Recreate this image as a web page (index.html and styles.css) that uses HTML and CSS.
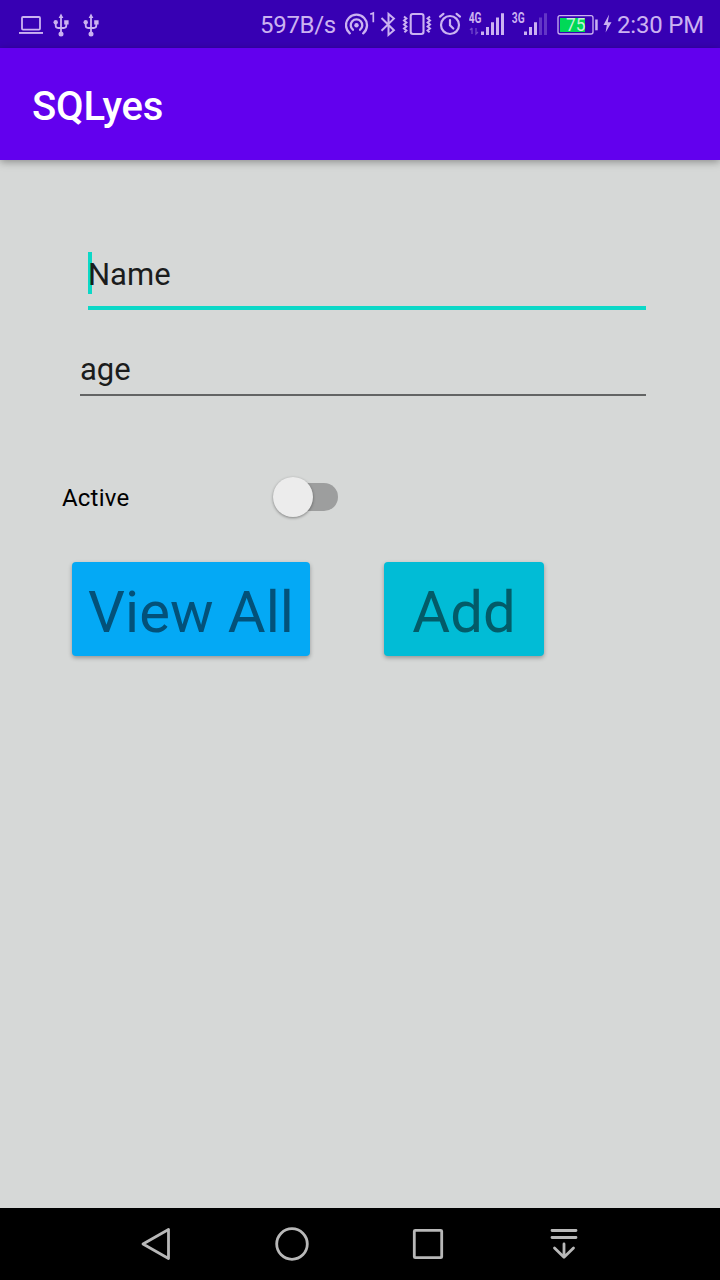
FILE: index.html
```html
<!DOCTYPE html>
<html lang="en">
<head>
<meta charset="utf-8">
<title>SQLyes</title>
<link rel="stylesheet" href="styles.css">
</head>
<body>
<div class="screen">
  <div class="status-bar">
    <div class="notifications">
      <svg class="icon" width="24" height="48" viewBox="19 0 24 48"><rect x="22" y="17" width="18" height="12.6" rx="1" fill="none" stroke="currentColor" stroke-width="1.8"/><path d="M19 32h24v1.9H19z" fill="currentColor"/></svg>
      <svg class="icon" width="16" height="48" viewBox="53 0 16 48"><g id="usb"><path d="M61 17v17M55.7 23v2.6q0 2.4 2.4 2.4h5.6q2.6 0 2.6-2.4V23" fill="none" stroke="currentColor" stroke-width="1.8"/><path d="M61 13.5l2.4 4.5h-4.8zM64.2 20.3h4.4v4.2h-4.4z" fill="currentColor"/><circle cx="55.7" cy="22.3" r="2.2" fill="currentColor"/><circle cx="61" cy="34" r="2.5" fill="currentColor"/></g></svg>
      <svg class="icon" width="16" height="48" viewBox="53 0 16 48"><use href="#usb"/></svg>
    </div>
    <div class="system">
      <span class="speed">597B/s</span>
      <svg class="icon hotspot" width="32" height="48" viewBox="345 0 32 48"><g fill="none" stroke="currentColor" stroke-width="2.3" stroke-linecap="round"><path d="M349.8 33.3a10.5 10.5 0 1 1 13.4 0"/><path d="M352.9 29.7a5.8 5.8 0 1 1 7.2 0"/></g><circle cx="356.5" cy="25.3" r="2.2" fill="currentColor"/><path d="M370.2 14.3l3.1-1.2v9.2" fill="none" stroke="currentColor" stroke-width="1.7"/></svg>
      <svg class="icon bluetooth" width="16" height="48" viewBox="380 0 16 48"><path d="M381.5 18l12.4 12.3-5.4 4.6V14l5.4 4.6-12.4 12.1" fill="none" stroke="currentColor" stroke-width="2"/></svg>
      <svg class="icon vibrate" width="30" height="48" viewBox="402 0 30 48"><rect x="410.7" y="14" width="12.8" height="20" rx="2.2" fill="none" stroke="currentColor" stroke-width="2.1"/><path d="M404 16.5l2.4 2-2.4 2 2.4 2-2.4 2 2.4 2-2.4 2 2.4 2-2 1.7M430 16.5l-2.4 2 2.4 2-2.4 2 2.4 2-2.4 2 2.4 2-2.4 2 2 1.7" fill="none" stroke="currentColor" stroke-width="2"/></svg>
      <svg class="icon alarm" width="24" height="48" viewBox="438 0 24 48"><g fill="none" stroke="currentColor" stroke-width="2.2" stroke-linecap="round"><circle cx="450" cy="25" r="9"/><path d="M450 20v5.3l3.3 3.2M440 16.6l3.4-2.8M460 16.6l-3.4-2.8"/></g></svg>
      <svg class="icon signal" width="36" height="48" viewBox="469 0 36 48"><text class="network" x="468.7" y="23" textLength="12.8" lengthAdjust="spacingAndGlyphs">4G</text><path d="M472 28v6M470 30l2-2M476 28v6l2-2" opacity=".4" fill="none" stroke="currentColor" stroke-width="1.3"/><path d="M481 31.5h3V35h-3zM486 27h3v8h-3zM491 22.3h3V35h-3zM496 17.5h3V35h-3zM501 13.3h3V35h-3z" fill="currentColor"/></svg>
      <svg class="icon signal-2" width="36" height="48" viewBox="512 0 36 48"><text class="network" x="511.8" y="23" textLength="12.8" lengthAdjust="spacingAndGlyphs">3G</text><path d="M524 31.5h3V35h-3zM529 27h3v8h-3zM534 22.3h3V35h-3z" fill="currentColor"/><path d="M539 17.5h3V35h-3zM544 13.3h3V35h-3z" fill="currentColor" opacity=".3"/></svg>
      <svg class="icon battery" width="42" height="48" viewBox="557 0 42 48"><rect x="558" y="15.7" width="35" height="18.3" rx="2" fill="none" stroke="currentColor" stroke-width="1.3"/><path d="M560 18h25v14h-25z" fill="#00d957"/><path d="M595.2 19.5h2.5v10.8h-2.5z" fill="currentColor"/><text class="level" x="566" y="31.3" textLength="19.5" lengthAdjust="spacingAndGlyphs">75</text></svg>
      <svg class="icon bolt" width="9" height="48" viewBox="602.5 0 9 48"><path d="M608.6 14.5L603 25h3.3l-1.2 7.5 5.9-10.2h-3.7z" fill="currentColor"/></svg>
      <span class="clock">2:30 PM</span>
    </div>
  </div>
  <header class="app-bar"><h1 class="title">SQLyes</h1></header>
  <main class="content">
    <div class="field name-field"><span class="caret"></span><span class="hint">Name</span></div>
    <div class="field age-field"><span class="hint">age</span></div>
    <div class="switch-row">
      <span class="switch-label">Active</span>
      <div class="switch"><span class="thumb"></span></div>
    </div>
    <div class="buttons">
      <button class="button view-all" type="button">View All</button>
      <button class="button add" type="button">Add</button>
    </div>
  </main>
  <nav class="nav-bar">
    <svg width="36" height="72" viewBox="138 1208 36 72"><path d="M168.5 1229.5v29L143 1244z"/></svg>
    <svg width="36" height="72" viewBox="274 1208 36 72"><circle cx="292" cy="1244" r="15.3"/></svg>
    <svg width="36" height="72" viewBox="410 1208 36 72"><rect x="414.3" y="1230.3" width="27.4" height="27.4" rx="1"/></svg>
    <svg width="36" height="72" viewBox="546 1208 36 72"><path d="M552 1230.5h24M552 1237.5h24M564 1244v13M554.5 1248l9.5 9.3 9.5-9.3"/></svg>
  </nav>
</div>
</body>
</html>
```
FILE: styles.css
```css
body {
  margin: 0;
  font-family: Roboto, "Noto Sans", sans-serif;
}

.screen {
  display: flex;
  flex-direction: column;
  width: 720px;
  height: 1280px;
  overflow: hidden;
  background: #d6d8d7;
}

.status-bar {
  display: flex;
  justify-content: space-between;
  height: 48px;
  box-sizing: border-box;
  padding: 0 16px 0 19px;
  background: #3700b3;
  color: #cbb2f1;
  font-size: 24px;
  line-height: 50px;
}

.notifications {
  display: flex;
  gap: 14px;
}

.notifications .icon:first-child {
  margin-right: -4px;
}

.system {
  display: flex;
}

.icon {
  display: block;
  flex: none;
}

.speed {
  width: 76px;
  margin-right: 9px;
  letter-spacing: -0.3px;
  white-space: nowrap;
}

.hotspot { margin-right: 3px; }
.bluetooth { margin-right: 6px; }
.vibrate { margin-right: 6px; }
.alarm { margin-right: 7px; }
.signal { margin-right: 7px; }
.signal-2 { margin-right: 9px; }
.battery { margin-right: 3.5px; }
.bolt { margin-right: 5.5px; }

.clock {
  width: 87px;
  letter-spacing: -0.2px;
  white-space: nowrap;
}

.network {
  fill: currentColor;
  font-size: 14px;
  font-weight: 700;
}

.level {
  fill: #c9edd9;
  font-size: 18px;
}

.app-bar {
  display: flex;
  align-items: center;
  height: 112px;
  padding: 0 32px;
  background: #6200ee;
  box-shadow: 0 2px 8px rgba(0, 0, 0, 0.35);
}

.title {
  margin: 4px 0 0;
  color: #fff;
  font-size: 40px;
  font-weight: 500;
  letter-spacing: -0.15px;
}

.content {
  display: flex;
  flex: 1;
  flex-direction: column;
  align-items: flex-start;
}

.field {
  display: flex;
  box-sizing: border-box;
  color: #1b1c1c;
  font-size: 31px;
  line-height: 42px;
}

.name-field {
  width: 558px;
  height: 58px;
  margin: 92px 0 0 88px;
  border-bottom: 4px solid #0cd8c7;
}

.name-field .hint {
  padding-top: 2px;
}

.caret {
  width: 4px;
  height: 42px;
  margin-right: -4px;
  background: #0cd8c7;
}

.age-field {
  width: 566px;
  height: 47px;
  margin: 39px 0 0 80px;
  border-bottom: 2px solid #636464;
}

.switch-row {
  display: flex;
  align-items: center;
  justify-content: space-between;
  width: 276px;
  height: 40px;
  margin: 81px 0 0 62px;
}

.switch-label {
  padding-top: 2px;
  color: #000;
  font-size: 24px;
  letter-spacing: 0.2px;
  line-height: 40px;
}

.switch {
  display: flex;
  align-items: center;
  width: 62px;
  height: 28px;
  border-radius: 14px;
  background: #9d9e9e;
}

.thumb {
  width: 40px;
  height: 40px;
  flex: none;
  margin-left: -3px;
  border-radius: 50%;
  background: #ececec;
  box-shadow: 0 1px 3px rgba(0, 0, 0, 0.4);
}

.buttons {
  display: flex;
  gap: 74px;
  margin: 45px 0 0 72px;
}

.button {
  height: 94px;
  padding: 5px 0 0;
  border: 0;
  border-radius: 4px;
  box-shadow: 0 2px 4px rgba(0, 0, 0, 0.3);
  font: 400 58px/88px Roboto, "Noto Sans", sans-serif;
  white-space: nowrap;
}

.view-all {
  width: 238px;
  background: #04a9f5;
  color: #035179;
}

.add {
  width: 160px;
  background: #01bcd6;
  color: #035b68;
}

.nav-bar {
  display: flex;
  gap: 100px;
  height: 72px;
  padding-left: 138px;
  background: #000;
  fill: none;
  stroke: #b8b8b8;
  stroke-width: 2.8;
  stroke-linecap: round;
  stroke-linejoin: round;
}
```
